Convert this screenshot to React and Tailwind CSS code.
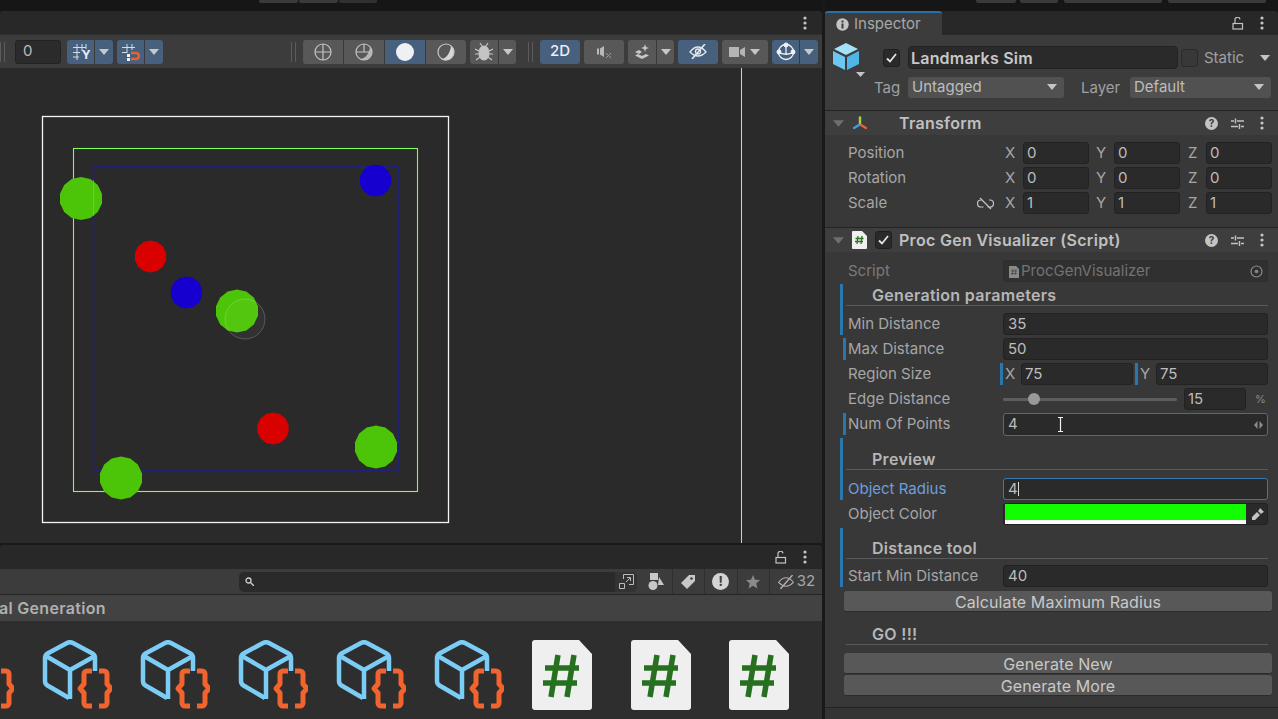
const font = { fontFamily: "Inter, 'Liberation Sans', sans-serif" };

// regular polygon, the gizmo spheres in the reference are low-poly
function polyPoints(cx, cy, r, n = 14) {
  return Array.from({ length: n }, (_, i) => {
    const a = (i / n) * Math.PI * 2 + Math.PI / 2;
    return `${(cx + Math.cos(a) * r).toFixed(1)},${(cy + Math.sin(a) * r).toFixed(1)}`;
  }).join(" ");
}

function Caret({ className = "" }) {
  return (
    <svg width="10" height="6" viewBox="0 0 10 6" className={className}>
      <path d="M0 0h10L5 6z" fill="currentColor" />
    </svg>
  );
}

function Kebab() {
  return (
    <svg width="4" height="14" viewBox="0 0 4 14" className="text-[#c4c4c4]">
      <circle cx="2" cy="2" r="1.6" fill="currentColor" />
      <circle cx="2" cy="7" r="1.6" fill="currentColor" />
      <circle cx="2" cy="12" r="1.6" fill="currentColor" />
    </svg>
  );
}

function OpenLock() {
  return (
    <svg width="12" height="13" viewBox="0 0 12 13" fill="none" stroke="#c4c4c4" strokeWidth="1.2">
      <rect x="1" y="6.5" width="9.5" height="5.5" />
      <path d="M3 6.5V3.2A2.4 2.4 0 0 1 8 2.4" />
    </svg>
  );
}

function HelpIcon() {
  return (
    <span className="flex h-[13px] w-[13px] items-center justify-center rounded-full bg-[#c4c4c4] text-[10px] font-bold leading-none text-[#3c3c3c]">
      ?
    </span>
  );
}

function PresetIcon() {
  return (
    <svg width="13" height="13" viewBox="0 0 13 13" fill="none" stroke="#c4c4c4" strokeWidth="1.4">
      <path d="M0 4h3M6 4h7M0 9.500h7M10 9.500h3M4.500 1.500v5M8.500 7v5" />
    </svg>
  );
}

function Check() {
  return (
    <span className="flex h-[18px] w-[17px] items-center justify-center rounded-[3px] border border-[#1f1f1f] bg-[#2a2a2a]">
      <svg width="11" height="10" viewBox="0 0 11 10" fill="none" stroke="#e4e4e4" strokeWidth="1.800">
        <path d="M1 5.500l3 3 6-7.500" />
      </svg>
    </span>
  );
}

function ComponentHeader({ icon, check, title }) {
  return (
    <div className="flex h-[25px] items-center border-t border-[#232323] bg-[#3e3e3e] pr-[14px]">
      <Caret className="ml-[8px] h-[7px] w-[11px] text-[#6e6e6e]" />
      <span className="ml-[7px] flex w-[17px] justify-center">{icon}</span>
      {check ? (
        <span className="ml-[7px]">
          <Check />
        </span>
      ) : (
        <span className="w-[24px]" />
      )}
      <span className="ml-[7px] text-[16px] font-semibold tracking-[0.3px] text-[#c0c0c0]">{title}</span>
      <span className="ml-auto flex items-center">
        <HelpIcon />
        <span className="ml-[13px]">
          <PresetIcon />
        </span>
        <span className="ml-[16px]">
          <Kebab />
        </span>
      </span>
    </div>
  );
}

function Field({ value, wide, className = "" }) {
  return (
    <div className={`flex h-[22px] items-center rounded-[3px] border border-[#222222] bg-[#2a2a2a] pt-px text-[15px] text-[#bdbdbd] ${wide ? "pl-[4px]" : "pl-[3px]"} ${className}`}>
      {value}
    </div>
  );
}

function Axis({ label, value, className = "" }) {
  return (
    <div className={`flex items-center ${className}`}>
      <span className="w-[18px] pt-px text-[15px] text-[#a6a6a6]">{label}</span>
      <Field value={value} className="w-[66px]" />
    </div>
  );
}

function TransformRow({ label, x, y, z, link }) {
  return (
    <div className="mb-[3px] flex h-[22px] items-center pl-[23px]">
      <span className="flex w-[157px] items-center pt-px text-[15px] text-[#a6a6a6]">
        {label}
        {link && (
          <svg width="17" height="13" viewBox="0 0 17 13" fill="none" stroke="#c4c4c4" strokeWidth="1.2" className="ml-auto mr-[11px]">
            <path d="M5 3H4a3.500 3.500 0 0 0 0 7h2.500M12 3h1a3.500 3.500 0 0 1 0 7h-2.500M3 1l11 11" />
          </svg>
        )}
      </span>
      <Axis label="X" value={x} />
      <Axis label="Y" value={y} className="ml-[7px]" />
      <Axis label="Z" value={z} className="ml-[8px]" />
    </div>
  );
}

function PropRow({ label, bar, children, labelClass = "text-[#a6a6a6]" }) {
  let rowClass = "ml-[15px] border-l-[3px] border-transparent pl-[5px]";
  if (bar === "near") rowClass = "ml-[18px] border-l-[3px] border-[#2a77ad] pl-[2px]";
  if (bar === "inner") rowClass = "pl-[5px]";
  return (
    <div className={`mb-[3px] flex h-[22px] items-center ${rowClass}`}>
      <span className={`w-[155px] shrink-0 pt-px text-[15px] ${labelClass}`}>{label}</span>
      {children}
    </div>
  );
}

function SectionHead({ title, className = "" }) {
  return (
    <div className={`ml-[3px] mr-[10px] flex items-end border-b border-[#5a5a5a] pl-[26px] text-[16px] font-semibold leading-[20px] tracking-[0.3px] text-[#b6b6b6] ${className}`}>
      {title}
    </div>
  );
}

function WideButton({ label, className = "" }) {
  return (
    <div className={`ml-[19px] mr-[6px] flex h-[21px] items-center justify-center rounded-[3px] border-b border-[#2b2b2b] bg-[#585858] pt-px text-[16px] tracking-[0.1px] text-[#c8c8c8] ${className}`}>
      {label}
    </div>
  );
}

function Dropdown({ label, className = "" }) {
  return (
    <div className={`flex h-[21px] items-center rounded-[3px] bg-[#515151] pb-px pl-[4px] pr-[7px] text-[15px] text-[#bdbdbd] ${className}`}>
      {label}
      <Caret className="ml-auto text-[#c4c4c4]" />
    </div>
  );
}

function Inspector() {
  return (
    <div className="flex w-[453px] flex-col" style={font}>
      <div className="flex h-[11px] items-start bg-[#161616] pl-[151px]">
        <span className="h-[3px] w-[40px] rounded-b-[2px] bg-[#3a3a3a]" />
        <span className="ml-[4px] h-[3px] w-[38px] rounded-b-[2px] bg-[#3a3a3a]" />
        <span className="ml-[6px] h-[3px] w-[98px] rounded-b-[2px] bg-[#3a3a3a]" />
        <span className="ml-[6px] h-[3px] w-[98px] rounded-b-[2px] bg-[#3a3a3a]" />
      </div>

      <div className="flex h-[24px] items-center rounded-t-[3px] bg-[#282828] pr-[14px]">
        <div className="flex h-full w-[117px] items-center rounded-t-[3px] border-t-2 border-[#2b6ea3] bg-[#3c3c3c] pl-[11px]">
          <svg width="13" height="13" viewBox="0 0 13 13">
            <circle cx="6.500" cy="6.500" r="6.200" fill="#c4c4c4" />
            <path d="M5.500 2.500h2v2h-2zM5.500 5.500h2v5h-2z" fill="#3c3c3c" />
          </svg>
          <span className="ml-[5px] text-[15px] text-[#a8a8a8]">Inspector</span>
        </div>
        <span className="ml-auto">
          <OpenLock />
        </span>
        <span className="ml-[16px]">
          <Kebab />
        </span>
      </div>

      <div className="flex h-[75px] flex-col bg-[#3c3c3c]">
        <div className="flex h-[42px] items-center pt-[3px]">
          <svg width="38" height="38" viewBox="0 0 38 38" className="ml-[7px] mt-[6px] shrink-0">
            <path d="M14 1l12 6-12 6L2 7z" fill="#a4e2fa" />
            <path d="M1 9l12 6v13L1 22z" fill="#6cc8f2" />
            <path d="M15 15l12-6v13l-12 6z" fill="#4fb4e6" />
            <path d="M24 30h9l-4.500 5z" fill="#c4c4c4" />
          </svg>
          <span className="ml-[13px] mt-[1px]">
            <Check />
          </span>
          <div className="ml-[8px] flex h-[23px] w-[270px] items-center rounded-[4px] border border-[#222222] bg-[#2a2a2a] pl-[2px] text-[16px] font-semibold tracking-[0.2px] text-[#c8c8c8]">
            Landmarks Sim
          </div>
          <span className="ml-[3px] mt-[1px] h-[18px] w-[17px] rounded-[3px] border border-[#2a2a2a] bg-[#383838]" />
          <span className="ml-[6px] pt-px text-[15px] text-[#a0a0a0]">Static</span>
          <Caret className="ml-[16px] text-[#c4c4c4]" />
        </div>
        <div className="flex h-[21px] items-center">
          <span className="ml-[49px] w-[34px] pt-px text-[15px] text-[#a0a0a0]">Tag</span>
          <Dropdown label="Untagged" className="w-[156px]" />
          <span className="ml-[17px] w-[49px] pt-px text-[15px] text-[#a0a0a0]">Layer</span>
          <Dropdown label="Default" className="w-[141px]" />
        </div>
      </div>

      <ComponentHeader
        title="Transform"
        icon={
          <svg width="16" height="15" viewBox="0 0 16 15" fill="none" strokeWidth="2.400" strokeLinecap="round">
            <path d="M8 1.500v6" stroke="#a5d24a" />
            <path d="M7 9l-5 3" stroke="#3f9fe0" />
            <path d="M9 9l5 3" stroke="#e8603a" />
          </svg>
        }
      />
      <div className="bg-[#383838] pb-[10px] pt-[7px]">
        <TransformRow label="Position" x="0" y="0" z="0" />
        <TransformRow label="Rotation" x="0" y="0" z="0" />
        <TransformRow label="Scale" x="1" y="1" z="1" link />
      </div>

      <ComponentHeader
        title="Proc Gen Visualizer (Script)"
        check
        icon={
          <svg width="15" height="18" viewBox="0 0 15 18">
            <path d="M1 0h9l5 5v12a1 1 0 0 1-1 1H1a1 1 0 0 1-1-1V1a1 1 0 0 1 1-1z" fill="#efefef" />
            <path d="M6 5L5 13M10 5L9 13M3.500 7.500h8M3 10.500h8" stroke="#2b7023" strokeWidth="1.300" />
          </svg>
        }
      />
      <div className="flex-1 bg-[#383838] pt-[8px]">
        <div className="flex h-[22px] items-center pl-[23px]">
          <span className="w-[155px] pt-px text-[15px] text-[#7a7a7a]">Script</span>
          <div className="flex h-[22px] w-[265px] items-center rounded-[3px] border border-[#2e2e2e] bg-[#303030] pl-[5px] pt-px text-[15px] text-[#737373]">
            <svg width="10" height="12" viewBox="0 0 10 12">
              <path d="M0 0h7l3 3v9H0z" fill="#8a8a8a" />
              <path d="M4 3L3 9M7 3L6 9M2 5h6M2 7.500h6" stroke="#555555" />
            </svg>
            <span className="ml-[2px]">ProcGenVisualizer</span>
            <svg width="13" height="13" viewBox="0 0 13 13" fill="none" className="ml-auto mr-[4px]">
              <circle cx="6.500" cy="6.500" r="5.500" stroke="#8a8a8a" strokeWidth="1.200" />
              <circle cx="6.500" cy="6.500" r="1.800" fill="#8a8a8a" />
            </svg>
          </div>
        </div>

        <div className="ml-[15px] mt-[2px] border-l-[3px] border-[#2a77ad]">
          <SectionHead title="Generation parameters" className="pt-px" />
          <div className="h-[7px]" />
          <PropRow label="Min Distance" bar="inner">
            <Field value="35" wide className="w-[265px]" />
          </PropRow>
        </div>
        <PropRow label="Max Distance" bar="near">
          <Field value="50" wide className="w-[265px]" />
        </PropRow>
        <PropRow label="Region Size">
          <div className="-ml-[3px] flex items-center">
            <span className="flex h-[22px] w-[21px] items-center border-l-[3px] border-[#2a77ad] pl-[2px] pt-px text-[15px] text-[#a6a6a6]">X</span>
            <Field value="75" className="w-[112px]" />
            <span className="ml-[2px] flex h-[22px] w-[21px] items-center border-l-[3px] border-[#2a77ad] pl-[2px] pt-px text-[15px] text-[#a6a6a6]">Y</span>
            <Field value="75" className="w-[112px]" />
          </div>
        </PropRow>
        <PropRow label="Edge Distance">
          <div className="relative flex h-[3px] w-[174px] items-center rounded bg-[#5e5e5e]">
            <span className="absolute left-[25px] h-[12px] w-[12px] rounded-full bg-[#999999]" />
          </div>
          <Field value="15" className="ml-[7px] w-[62px]" />
          <span className="ml-[9px] text-[11px] text-[#8a8a8a]">%</span>
        </PropRow>
        <PropRow label="Num Of Points" bar="near">
          <div className="relative flex h-[23px] w-[265px] items-center rounded-[3px] border border-[#666666] bg-[#2a2a2a] pl-[4px] pt-px text-[15px] text-[#bdbdbd]">
            4
            <svg width="7" height="15" viewBox="0 0 7 15" fill="none" stroke="#f2f2f2" strokeWidth="1.200" className="absolute left-[53px] top-[3px]">
              <path d="M1 .5h5M3.500 .5v14M1 14.500h5" />
            </svg>
            <svg width="9" height="8" viewBox="0 0 9 8" className="ml-auto mr-[4px]">
              <path d="M3.500 0v8L0 4zM5.500 0v8L9 4z" fill="#8c8c8c" />
            </svg>
          </div>
        </PropRow>

        <div className="ml-[15px] border-l-[3px] border-[#2a77ad]">
          <SectionHead title="Preview" className="pt-[11px]" />
          <div className="h-[8px]" />
          <PropRow label="Object Radius" bar="inner" labelClass="text-[#6f9edb]">
            <div className="flex h-[22px] w-[265px] items-center rounded-[3px] border border-[#3d77ad] bg-[#2a2a2a] pl-[4px] text-[15px] text-[#bdbdbd]">
              4<span className="h-[14px] w-px bg-[#d8d8d8]" />
            </div>
          </PropRow>
        </div>
        <PropRow label="Object Color">
          <div className="flex h-[22px] w-[265px] items-center rounded-[3px] border border-[#222222] bg-[#2a2a2a] pl-px">
            <div className="flex h-[20px] w-[241px] flex-col">
              <span className="h-[16px] bg-[#11fd00]" />
              <span className="h-[4px] bg-white" />
            </div>
            <svg width="14" height="14" viewBox="0 0 14 14" className="ml-[5px]">
              <path d="M9 1l4 4-2 1-1 1-3-3 1-1zM6 5l3 3-5 5H1v-3z" fill="#c4c4c4" />
            </svg>
          </div>
        </PropRow>

        <div className="ml-[15px] border-l-[3px] border-[#2a77ad]">
          <SectionHead title="Distance tool" className="pt-[10px]" />
          <div className="h-[6px]" />
          <PropRow label="Start Min Distance" bar="inner">
            <Field value="40" wide className="w-[265px]" />
          </PropRow>
        </div>
        <WideButton label="Calculate Maximum Radius" className="mt-[4px]" />
        <div className="ml-[15px] border-l-[3px] border-transparent">
          <SectionHead title="GO !!!" className="pt-[12px]" />
        </div>
        <WideButton label="Generate New" className="mt-[8px]" />
        <WideButton label="Generate More" className="mt-px" />
      </div>
      <div className="h-[12px] border-t border-[#232323] bg-[#343434]" />
    </div>
  );
}

function ToolBtn({ blue, className = "", children }) {
  return (
    <div className={`flex h-[24px] items-center justify-center ${blue ? "bg-[#46607e]" : "bg-[#585858]"} ${className}`}>
      {children}
    </div>
  );
}

function SplitBtn({ blue, icon, left = "w-[29px]", right = "w-[16px]", className = "" }) {
  return (
    <div className={`flex overflow-hidden rounded-[3px] ${className}`}>
      <ToolBtn blue={blue} className={`border-r border-[#3a3a3a] ${left}`}>
        {icon}
      </ToolBtn>
      <ToolBtn blue={blue} className={right}>
        <Caret className="text-[#c8c8c8]" />
      </ToolBtn>
    </div>
  );
}

function Sep() {
  return (
    <span className="flex h-[20px] w-[5px] justify-between">
      <span className="w-px bg-[#5c5c5c]" />
      <span className="w-px bg-[#5c5c5c]" />
    </span>
  );
}

function SceneToolbar() {
  return (
    <div className="flex h-[34px] shrink-0 items-center border-t border-[#303030] bg-[#3c3c3c]">
      <Sep />
      <div className="ml-[10px] flex h-[24px] w-[46px] items-center rounded-[3px] border border-[#232323] bg-[#2b2b2b] pl-[7px] text-[15px] text-[#bdbdbd]">
        0
      </div>
      <SplitBtn
        blue
        className="ml-[6px]"
        left="w-[28px]"
        right="w-[18px]"
        icon={
          <span className="relative flex h-[18px] w-[18px]">
            <svg width="18" height="18" viewBox="0 0 18 18" fill="none" stroke="#d4dce6">
              <path d="M1 4.500h13M1 9.500h7M1 14h6M5 1v16M10 1v7M14 1v5" />
            </svg>
            <span className="absolute bottom-0 right-[-1px] text-[12px] font-bold leading-[12px] text-[#e8eef4]">Y</span>
          </span>
        }
      />
      <SplitBtn
        blue
        className="ml-[4px]"
        left="w-[28px]"
        right="w-[18px]"
        icon={
          <svg width="19" height="18" viewBox="0 0 19 18" fill="none">
            <path d="M1 4.500h13M1 9.500h5M6 1v9M11 1v6" stroke="#d4dce6" />
            <path d="M10 10h5a3 3 0 0 1 0 6h-5" stroke="#ec6030" strokeWidth="2.500" />
            <path d="M6 11h3v3H6zM6 15h3v3H6z" fill="#f0f0f0" />
          </svg>
        }
      />
      <span className="ml-[128px]">
        <Sep />
      </span>
      <div className="ml-[7px] flex overflow-hidden rounded-[3px]">
        <ToolBtn className="w-[41px] border-r border-[#3a3a3a]">
          <svg width="18" height="18" viewBox="0 0 18 18" fill="none" stroke="#c4c4c4" strokeWidth="1.200">
            <circle cx="9" cy="9" r="8" />
            <path d="M1 9h16M9 1v16" />
          </svg>
        </ToolBtn>
        <ToolBtn className="w-[41px] border-r border-[#3a3a3a]">
          <svg width="18" height="18" viewBox="0 0 18 18" fill="none" stroke="#c4c4c4" strokeWidth="1.200">
            <path d="M15 4a8 8 0 0 1-10 12c5 0 9-5 10-12z" fill="#b4b4b4" stroke="none" />
            <circle cx="9" cy="9" r="8" />
            <path d="M1 9h8V1M9 9h6" />
          </svg>
        </ToolBtn>
        <ToolBtn blue className="w-[41px] border-r border-[#3a3a3a]">
          <span className="h-[18px] w-[18px] rounded-full bg-[#eef0f3]" />
        </ToolBtn>
        <ToolBtn className="w-[40px]">
          <svg width="18" height="18" viewBox="0 0 18 18" fill="none">
            <path d="M14 2.500A8.500 8.500 0 0 1 4 16.200C9 16 13.500 10 14 2.500z" fill="#d8d8d8" />
            <circle cx="9" cy="9" r="8" stroke="#c8c8c8" strokeWidth="1.200" />
          </svg>
        </ToolBtn>
      </div>
      <SplitBtn
        className="ml-[4px]"
        right="w-[17px]"
        icon={
          <svg width="18" height="19" viewBox="0 0 18 19" fill="#c4c4c4" stroke="#c4c4c4" strokeWidth="1.200">
            <ellipse cx="9" cy="11" rx="5" ry="7" />
            <path d="M5 1l2 3M13 1l-2 3M0 7l4 2M18 7l-4 2M0 12h4M18 12h-4M1 18l4-3M17 18l-4-3" fill="none" />
          </svg>
        }
      />
      <span className="ml-[12px]">
        <Sep />
      </span>
      <ToolBtn blue className="ml-[7px] w-[40px] rounded-[3px] text-[15px] font-medium text-[#e8eef4]">
        2D
      </ToolBtn>
      <ToolBtn className="ml-[4px] w-[40px] rounded-[3px]">
        <svg width="15" height="14" viewBox="0 0 15 14" fill="none">
          <path d="M0 3.500h2v6H0zM3 3.500L7 1v11L3 9.500z" fill="#b8b8b8" />
          <path d="M9 8l5 5M14 8l-5 5" stroke="#9a9a9a" />
        </svg>
      </ToolBtn>
      <SplitBtn
        className="ml-[4px]"
        right="w-[17px]"
        icon={
          <svg width="17" height="15" viewBox="0 0 17 15" fill="#c8c8c8">
            <path d="M1 8l4-2 3 2-3 2zM1 11.500l3-1.500 4 2 4-2 3 1.500L8 15z" />
            <path d="M11 0l1 3 3 1-3 1-1 3-1-3-3-1 3-1z" />
          </svg>
        }
      />
      <ToolBtn blue className="ml-[4px] w-[40px] rounded-[3px]">
        <svg width="18" height="15" viewBox="0 0 18 15" fill="none" stroke="#e2e8ee" strokeWidth="1.300">
          <path d="M1 8c3-4 6-5 8-5s5 1 8 5c-3 3-6 4-8 4s-5-1-8-4z" />
          <circle cx="9" cy="7.500" r="2.500" />
          <path d="M16 0L3 15" strokeWidth="1.600" />
        </svg>
      </ToolBtn>
      <div className="ml-[4px] flex h-[24px] w-[46px] items-center rounded-[3px] bg-[#585858]">
        <svg width="16" height="12" viewBox="0 0 16 12" className="ml-[7px]">
          <path d="M0 1h10v10H0zM11 4l5-3v10l-5-3z" fill="#b4b4b4" />
        </svg>
        <Caret className="ml-[5px] text-[#c4c4c4]" />
      </div>
      <SplitBtn
        blue
        className="ml-[4px]"
        left="w-[28px]"
        right="w-[18px]"
        icon={
          <svg width="20" height="20" viewBox="0 0 20 20" fill="none" stroke="#eef2f6" strokeWidth="1.300">
            <circle cx="10" cy="10" r="7.500" />
            <path d="M2.500 10C6 13 14 13 17.500 10M10 3v9" />
            <circle cx="10" cy="3" r="1.800" fill="#eef2f6" />
            <circle cx="3" cy="10" r="1.800" fill="#eef2f6" />
            <circle cx="17" cy="10" r="1.800" fill="#eef2f6" />
          </svg>
        }
      />
    </div>
  );
}

function SceneCanvas() {
  const green = [[81, 198.500], [237, 311], [376, 447], [121, 478]];
  const red = [[150.500, 256.500], [273, 428.500]];
  const blue = [[375.500, 180.500], [186.500, 292.500]];
  return (
    <svg width="822" height="475" viewBox="0 68 822 475" className="block shrink-0 bg-[#2a2a2a]">
      <path d="M741.500 68v475" stroke="#cfcfcf" />
      <rect x="42.500" y="116.500" width="406" height="406" fill="none" stroke="#f4f4f4" strokeWidth="1.300" />
      <rect x="73.500" y="148.500" width="344" height="343" fill="none" stroke="#80ff5a" strokeWidth="1.100" />
      <rect x="93.500" y="167" width="304.500" height="304" fill="none" stroke="#1e1e9a" strokeWidth="1.400" />
      {green.map(([cx, cy]) => (
        <polygon key={`g${cx}`} points={polyPoints(cx, cy, 21.500)} fill="#4cc407" />
      ))}
      <path d="M93.500 180v36" stroke="#7fe05a" strokeOpacity="0.500" />
      {red.map(([cx, cy]) => (
        <polygon key={`r${cx}`} points={polyPoints(cx, cy, 16)} fill="#d90000" />
      ))}
      {blue.map(([cx, cy]) => (
        <polygon key={`b${cx}`} points={polyPoints(cx, cy, 16)} fill="#1600d0" />
      ))}
      <circle cx="245" cy="319" r="20" fill="#ffffff" fillOpacity="0.040" stroke="#ffffff" strokeOpacity="0.200" />
    </svg>
  );
}

function CubeIcon() {
  return (
    <svg width="70" height="70" viewBox="0 0 70 70" fill="none" className="shrink-0">
      <g stroke="#7ccdf5" strokeWidth="4.500" strokeLinecap="butt" strokeLinejoin="round">
        <path d="M53 31V18q0-3-2.500-4.500L31 3q-3-1.500-6 0L5.500 13.500Q3 15 3 18v23q0 3 2.500 4.500L27 58" />
        <path d="M4 16l24 14 25-14M28 30v29" />
      </g>
      <g stroke="#f2642e" strokeWidth="5" fill="none" strokeLinejoin="round">
        <path d="M50 31h-5a3 3 0 0 0-3 3v10l-4 4.500 4 4.500v10a3 3 0 0 0 3 3h5" />
        <path d="M57 31h5a3 3 0 0 1 3 3v10l4 4.500-4 4.500v10a3 3 0 0 1-3 3h-5" />
      </g>
    </svg>
  );
}

function ScriptIcon({ className = "" }) {
  return (
    <svg width="60" height="70" viewBox="0 0 60 70" className={`shrink-0 ${className}`}>
      <path d="M3 0h44l13 14v53a3 3 0 0 1-3 3H3a3 3 0 0 1-3-3V3a3 3 0 0 1 3-3z" fill="#efefef" />
      <path d="M26 15l-7 42M42 15l-7 42M13 28h34M11 43h34" stroke="#27701f" strokeWidth="5.500" fill="none" />
    </svg>
  );
}

function ProjectPanel() {
  const filters = [
    <svg key="type" width="16" height="17" viewBox="0 0 16 17" fill="#c8c8c8">
      <rect x="2" y="0" width="8" height="7" />
      <circle cx="5" cy="12.500" r="4.500" />
      <path d="M11 4l5 8h-6z" />
    </svg>,
    <svg key="label" width="14" height="14" viewBox="0 0 14 14">
      <path d="M8 0h6v6l-8 8-6-6z" fill="#c8c8c8" />
      <circle cx="10.500" cy="3.500" r="1.300" fill="#3c3c3c" />
    </svg>,
    <span key="warn" className="flex h-[17px] w-[17px] items-center justify-center rounded-full bg-[#d4d4d4] text-[13px] font-bold leading-none text-[#3c3c3c]">
      !
    </span>,
    <svg key="star" width="14" height="14" viewBox="0 0 14 14">
      <path d="M7 0l2 4.700 5 .4-3.800 3.300 1.200 5L7 10.700 2.600 13.400l1.200-5L0 5.100l5-.4z" fill="#8a8a8a" />
    </svg>,
  ];
  return (
    <div className="flex min-h-0 flex-1 flex-col" style={font}>
      <div className="flex h-[24px] shrink-0 items-center justify-end rounded-t-[3px] bg-[#282828] pr-[15px]">
        <OpenLock />
        <span className="ml-[16px]">
          <Kebab />
        </span>
      </div>
      <div className="flex h-[26px] shrink-0 items-center border-b border-[#232323] bg-[#3c3c3c] pl-[239px]">
        <div className="flex h-[20px] w-[376px] items-center rounded-l-[5px] bg-[#2a2a2a] pl-[6px]">
          <svg width="9" height="9" viewBox="0 0 9 9" fill="none" stroke="#d0d0d0" strokeWidth="1.300">
            <circle cx="3.500" cy="3.500" r="2.500" />
            <path d="M5.500 5.500L9 9" />
          </svg>
        </div>
        <div className="flex h-[20px] w-[22px] items-center justify-center rounded-r-[5px] bg-[#333333]">
          <svg width="15" height="15" viewBox="0 0 15 15" fill="none" stroke="#bcbcbc">
            <path d="M4.500 5V.5h10v10H10M.5 9.500h5v5h-5zM7 8l4-4M8 3.500h3.500V7" />
          </svg>
        </div>
        <div className="ml-[3px] flex h-[25px]">
          {filters.map((icon) => (
            <span key={icon.key} className="flex w-[32.500px] items-center justify-center border-r border-[#2f2f2f]">
              {icon}
            </span>
          ))}
        </div>
        <span className="flex w-[52px] items-center justify-center text-[15px] text-[#a6a6a6]">
          <svg width="18" height="14" viewBox="0 0 18 15" fill="none" stroke="#b0b0b0" strokeWidth="1.200" className="mr-[2px]">
            <path d="M1 8c3-4 6-5 8-5s5 1 8 5c-3 3-6 4-8 4s-5-1-8-4z" />
            <path d="M16 0L3 15" strokeWidth="1.500" />
          </svg>
          32
        </span>
      </div>
      <div className="flex h-[26px] shrink-0 items-center bg-[#424242] pb-px text-[16px] font-semibold tracking-[0.3px] text-[#b0b0b0]">
        <span className="-ml-px">al Generation</span>
      </div>
      <div className="flex flex-1 overflow-hidden bg-[#2e2e2e] pt-[19px]">
        <div className="-ml-[56px] flex items-start gap-[28px]">
          <CubeIcon />
          <CubeIcon />
          <CubeIcon />
          <CubeIcon />
          <CubeIcon />
          <CubeIcon />
          <ScriptIcon />
          <ScriptIcon className="ml-[11px]" />
          <ScriptIcon className="ml-[10px]" />
        </div>
      </div>
    </div>
  );
}

export default function App() {
  return (
    <div className="flex h-[719px] w-[1278px] gap-[3px] overflow-hidden bg-[#191919]" style={font}>
      <div className="flex w-[822px] flex-col">
        <div className="flex h-[11px] shrink-0 items-start bg-[#161616] pl-[259px]">
          <span className="h-[3px] w-[39px] rounded-b-[2px] bg-[#3a3a3a]" />
          <span className="ml-px h-[3px] w-[39px] rounded-b-[2px] bg-[#3a3a3a]" />
          <span className="ml-px h-[3px] w-[38px] rounded-b-[2px] bg-[#303030]" />
        </div>
        <div className="flex h-[23px] shrink-0 items-center justify-end rounded-t-[3px] bg-[#282828] pr-[15px]">
          <Kebab />
        </div>
        <SceneToolbar />
        <SceneCanvas />
        <div className="h-[2px] shrink-0" />
        <ProjectPanel />
      </div>
      <Inspector />
    </div>
  );
}
